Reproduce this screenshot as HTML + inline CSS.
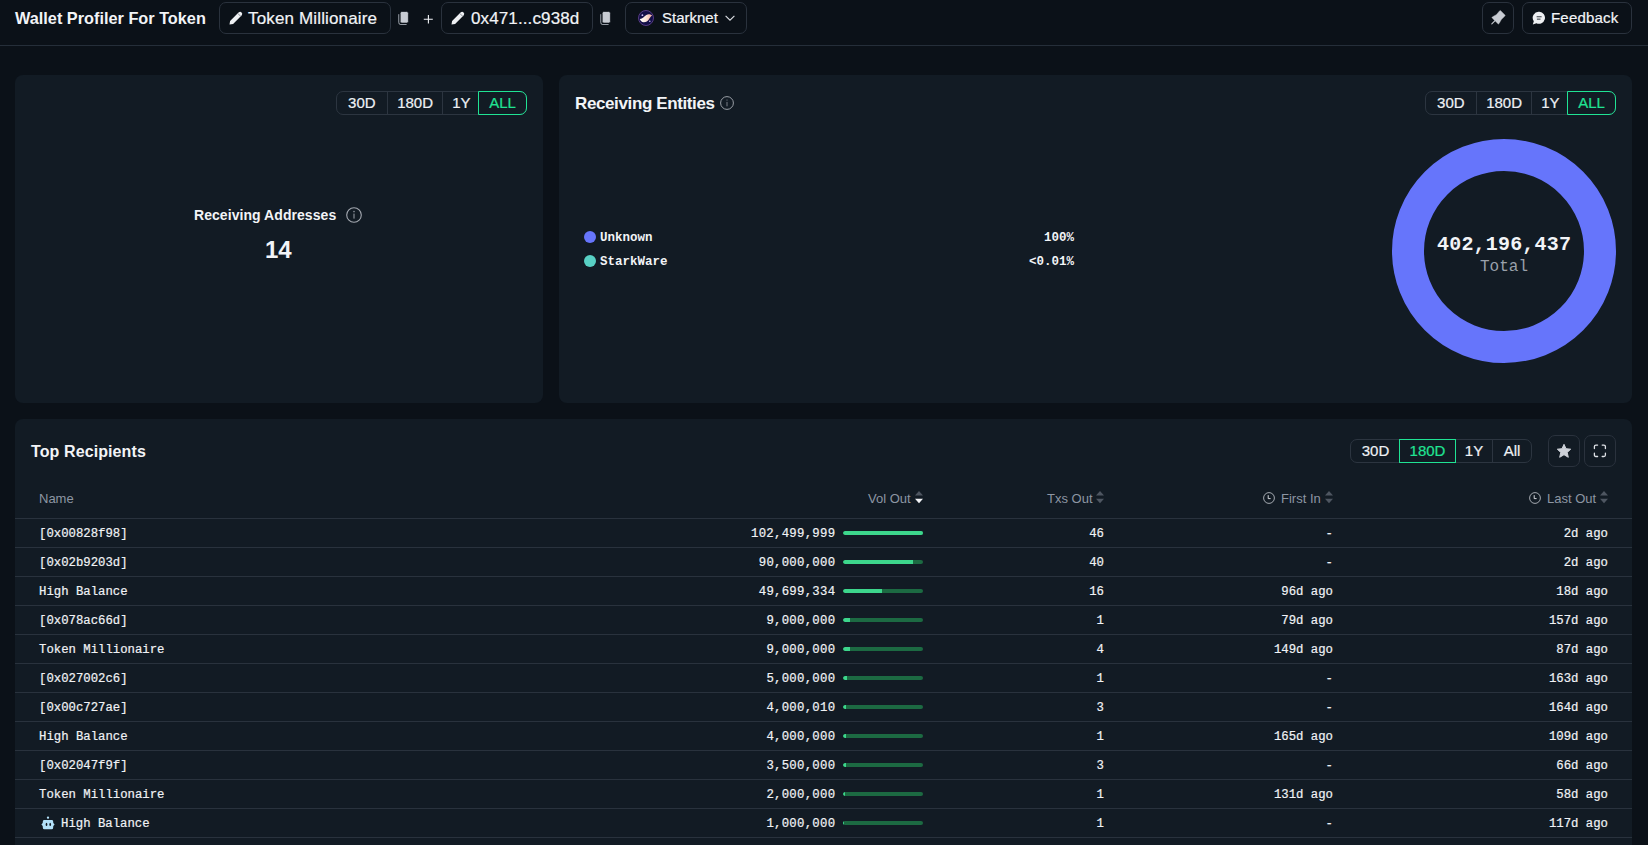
<!DOCTYPE html>
<html><head><meta charset="utf-8">
<style>
*{box-sizing:border-box;margin:0;padding:0}
html,body{width:1648px;height:845px;overflow:hidden;background:#0b1118;color:#f2f4f7;font-family:"Liberation Sans",sans-serif}
.abs{position:absolute;white-space:nowrap;line-height:1}
.med{-webkit-text-stroke:0.2px currentColor}
.hdr{position:absolute;left:0;top:0;width:1648px;height:46px;border-bottom:1px solid #252e39}
.btn{position:absolute;top:2px;height:32px;border:1px solid #2a323d;border-radius:7px;background:#0b1118}
.card{position:absolute;background:#121b24;border-radius:8px}
.seg{position:absolute;border:1px solid #2c3540;border-radius:7px;display:flex}
.seg div{-webkit-text-stroke:0.2px currentColor;height:100%;display:flex;align-items:center;justify-content:center;font-size:15px;padding-bottom:2px;color:#eef1f5;border-left:1px solid #2c3540;position:relative}
.seg div:first-child{border-left:none}
.seg div.on{color:#20e394;border:1px solid #20e394;margin:-1px -1px -1px -1px;height:calc(100% + 2px);z-index:1}
.row{position:absolute;left:15px;width:1617px;height:29px;border-bottom:1px solid #29323d}
.row span{position:absolute;top:9.2px;line-height:1;font-family:"Liberation Mono",monospace;font-size:12.3px;color:#f0f2f5;white-space:pre;-webkit-text-stroke:0.2px #f0f2f5}
.bar{position:absolute;left:828px;top:12px;width:80px;height:4px;border-radius:2px;background:#1c6a42;overflow:hidden}
.bar i{display:block;height:100%;background:#3dd68c;border-radius:2px 0 0 2px}
.th{position:absolute;top:492px;font-size:13px;line-height:1;color:#8d96a3;white-space:nowrap}
.mono{font-family:"Liberation Mono",monospace}
</style></head><body>

<div class="hdr"></div>
<div class="abs" style="left:15px;top:10px;font-size:16.3px;font-weight:bold">Wallet Profiler For Token</div>

<div class="btn" style="left:219px;width:172px"></div>
<svg class="abs" style="left:229px;top:11px" width="14" height="14" viewBox="0 0 14 14"><path d="M0.5 13.5 L1.1 9.9 L9.8 1.2 A2.15 2.15 0 0 1 12.8 4.2 L4.1 12.9 Z" fill="#eef0f3"/><path d="M8.7 2.3 L11.7 5.3" stroke="#737a82" stroke-width="0.85"/></svg>
<div class="abs med" style="left:248px;top:10.3px;font-size:17px;letter-spacing:0.15px">Token Millionaire</div>

<svg class="abs" style="left:398px;top:11px" width="11" height="14" viewBox="0 0 11 14"><path d="M0.8 3.2 V11.6 Q0.8 13.6 2.8 13.6 H8.6" stroke="#a4aab2" stroke-width="1" fill="none"/><rect x="2.2" y="0.5" width="8.2" height="11.6" rx="1.7" fill="#c8ccd3" stroke="#0b1118" stroke-width="0.7"/></svg>
<svg class="abs" style="left:423px;top:14px" width="10" height="10" viewBox="0 0 10 10"><path d="M5.4 1 V9.5 M0.8 5.3 H9.8" stroke="#f2f4f7" stroke-width="1.1"/></svg>

<div class="btn" style="left:441px;width:152px"></div>
<svg class="abs" style="left:451px;top:11px" width="14" height="14" viewBox="0 0 14 14"><path d="M0.5 13.5 L1.1 9.9 L9.8 1.2 A2.15 2.15 0 0 1 12.8 4.2 L4.1 12.9 Z" fill="#eef0f3"/><path d="M8.7 2.3 L11.7 5.3" stroke="#737a82" stroke-width="0.85"/></svg>
<div class="abs med" style="left:471px;top:10.3px;font-size:17px;letter-spacing:0.12px">0x471...c938d</div>
<svg class="abs" style="left:600px;top:11px" width="11" height="14" viewBox="0 0 11 14"><path d="M0.8 3.2 V11.6 Q0.8 13.6 2.8 13.6 H8.6" stroke="#a4aab2" stroke-width="1" fill="none"/><rect x="2.2" y="0.5" width="8.2" height="11.6" rx="1.7" fill="#c8ccd3" stroke="#0b1118" stroke-width="0.7"/></svg>

<div class="btn" style="left:625px;width:122px"></div>
<svg class="abs" style="left:638px;top:10px" width="16" height="16" viewBox="0 0 16 16"><defs><linearGradient id="sg" x1="0" y1="0" x2="1" y2="0"><stop offset="0" stop-color="#ffffff"/><stop offset="0.5" stop-color="#fbe6dc"/><stop offset="1" stop-color="#f0a898"/></linearGradient></defs><circle cx="8" cy="8" r="7.5" fill="#130f48" stroke="#5e3f8c" stroke-width="0.9"/><path d="M1.8 9 C3.5 8.8 5 8.4 6.4 6.6 C7.7 4.9 9.4 4 11.4 4.2 C12.5 4.3 13.5 4.8 14.2 5.4 C13 5.9 12 7.5 11 9.2 C9.8 11.2 8 12.3 5.6 12.2 C3.8 12.1 2.5 10.8 1.8 9 Z" fill="url(#sg)"/><circle cx="4.4" cy="5.2" r="0.9" fill="#cbb8f2"/><circle cx="11.8" cy="11.2" r="0.8" fill="#cbb8f2"/></svg>
<div class="abs med" style="left:662px;top:10.3px;font-size:15px">Starknet</div>
<svg class="abs" style="left:725px;top:15px" width="10" height="6" viewBox="0 0 10 6"><path d="M0.6 0.8 L5 5.2 L9.4 0.8" fill="none" stroke="#dcdfe4" stroke-width="1.1"/></svg>

<div class="btn" style="left:1482px;width:32px"></div>
<svg class="abs" style="left:1486px;top:6px" width="24" height="24" viewBox="0 0 24 24"><path d="M13.6 4.9 Q14.2 4.3 14.8 4.9 L18.8 8.9 Q19.4 9.5 18.8 10.1 L15.3 13.5 L13 17.6 Q12.6 18.2 12 17.7 L6.2 11.9 Q5.7 11.4 6.3 11 L10.4 8.7 Z" fill="#c8ccd3" stroke="#c8ccd3" stroke-width="0.5" stroke-linejoin="round"/><path d="M8.8 14.9 L5.8 17.9" stroke="#c8ccd3" stroke-width="1.1" stroke-linecap="round"/></svg>

<div class="btn" style="left:1522px;width:110px"></div>
<svg class="abs" style="left:1532px;top:11px" width="14" height="14" viewBox="0 0 14 14"><path d="M7.4 0.8 A6 6 0 1 1 4.4 12.2 L0.8 13.4 L1.8 10.2 A6 6 0 0 1 7.4 0.8 Z" fill="#eef0f3"/><rect x="4.6" y="5.2" width="5" height="1.1" fill="#444a52"/><rect x="4.9" y="7.6" width="3.6" height="1.1" fill="#444a52"/></svg>
<div class="abs med" style="left:1551px;top:10.1px;font-size:15px;letter-spacing:0.2px">Feedback</div>

<!-- Card 1 -->
<div class="card" style="left:15px;top:75px;width:528px;height:328px"></div>
<div class="seg" style="left:336px;top:91px;width:191px;height:24px">
 <div style="width:50px">30D</div><div style="width:56px">180D</div><div style="width:37px">1Y</div><div class="on" style="width:49px;border-radius:0 7px 7px 0">ALL</div>
</div>
<div class="abs" style="left:194px;top:208px;font-size:14px;font-weight:bold;letter-spacing:0.06px">Receiving Addresses</div>
<svg class="abs" style="left:346px;top:207px" width="16" height="16" viewBox="0 0 16 16"><circle cx="8" cy="8" r="7.3" fill="none" stroke="#a3a8b0" stroke-width="1.1"/><rect x="7.35" y="6.6" width="1.3" height="5" fill="#7d838c"/><circle cx="8" cy="4.6" r="0.8" fill="#8d939b"/></svg>
<div class="abs" style="left:265px;top:237.5px;font-size:24px;font-weight:bold">14</div>

<!-- Card 2 -->
<div class="card" style="left:559px;top:75px;width:1073px;height:328px"></div>
<div class="abs" style="left:575px;top:95.2px;font-size:17px;font-weight:bold;letter-spacing:-0.38px">Receiving Entities</div>
<svg class="abs" style="left:720px;top:96px" width="14" height="14" viewBox="0 0 14 14"><circle cx="7" cy="7" r="6.4" fill="none" stroke="#a0a5ad" stroke-width="0.95"/><rect x="6.45" y="5.9" width="1.1" height="4.4" fill="#6f757e"/><rect x="6.45" y="3.6" width="1.1" height="1" fill="#6f757e"/></svg>
<div class="seg" style="left:1425px;top:91px;width:191px;height:24px">
 <div style="width:50px">30D</div><div style="width:56px">180D</div><div style="width:37px">1Y</div><div class="on" style="width:49px;border-radius:0 7px 7px 0">ALL</div>
</div>
<div class="abs" style="left:584px;top:231px;width:12px;height:12px;border-radius:50%;background:#6675fb"></div>
<div class="abs" style="left:584px;top:255px;width:12px;height:12px;border-radius:50%;background:#58d0c4"></div>
<div class="abs mono" style="left:600px;top:231.7px;font-size:12.5px;font-weight:bold">Unknown</div>
<div class="abs mono" style="left:600px;top:255.7px;font-size:12.5px;font-weight:bold">StarkWare</div>
<div class="abs mono" style="right:574px;top:231.7px;font-size:12.5px;font-weight:bold">100%</div>
<div class="abs mono" style="right:574px;top:255.7px;font-size:12.5px;font-weight:bold">&lt;0.01%</div>
<svg class="abs" style="left:1392px;top:139px" width="224" height="224" viewBox="0 0 224 224"><circle cx="112" cy="112" r="96" fill="none" stroke="#6675fb" stroke-width="32"/></svg>
<div class="abs mono" style="left:1404px;width:200px;text-align:center;top:235px;font-size:20px;font-weight:bold;letter-spacing:0.18px;text-indent:0.18px">402,196,437</div>
<div class="abs mono" style="left:1404px;width:200px;text-align:center;top:258.7px;font-size:16px;color:#9aa1ab">Total</div>

<!-- Card 3 -->
<div class="card" style="left:15px;top:419px;width:1617px;height:440px"></div>
<div class="abs" style="left:31px;top:443.6px;font-size:16px;font-weight:bold;letter-spacing:0.1px">Top Recipients</div>
<div class="seg" style="left:1350px;top:439px;width:182px;height:24px">
 <div style="width:49px">30D</div><div class="on" style="width:57px;border-radius:0">180D</div><div style="width:37px">1Y</div><div style="width:39px">All</div>
</div>
<div class="btn" style="left:1548px;top:435px;width:32px;background:#121b24"></div>
<svg class="abs" style="left:1556px;top:443px" width="16" height="16" viewBox="0 0 16 16"><path d="M8 1.3 L10 5.7 L14.7 6.2 L11.2 9.4 L12.3 14.3 L8 11.7 L3.7 14.3 L4.8 9.4 L1.3 6.2 L6 5.7 Z" fill="#cdd1d8" stroke="#cdd1d8" stroke-width="1" stroke-linejoin="round"/></svg>
<div class="btn" style="left:1584px;top:435px;width:32px;background:#121b24"></div>
<svg class="abs" style="left:1593px;top:444px" width="14" height="14" viewBox="0 0 14 14"><path d="M1.4 4.6 V2.6 Q1.4 1.1 2.9 1.1 H4.6 M9.2 1.1 H10.9 Q12.4 1.1 12.4 2.6 V4.6 M12.4 9.2 V11 Q12.4 12.5 10.9 12.5 H9.2 M4.6 12.5 H2.9 Q1.4 12.5 1.4 11 V9.2" fill="none" stroke="#dfe2e7" stroke-width="1.3" stroke-linecap="round"/></svg>

<div class="th" style="left:39px">Name</div>
<div class="th" style="left:868px">Vol Out</div>
<svg class="abs" style="left:915px;top:491px" width="8" height="13" viewBox="0 0 8 13"><path d="M0 4.4 L4 0 L8 4.4 Z" fill="#4e5661"/><path d="M0 7.8 L4 12.2 L8 7.8 Z" fill="#f2f4f7"/></svg>
<div class="th" style="left:1047px">Txs Out</div>
<svg class="abs" style="left:1096px;top:491px" width="8" height="13" viewBox="0 0 8 13"><path d="M0 4.4 L4 0 L8 4.4 Z" fill="#4e5661"/><path d="M0 7.8 L4 12.2 L8 7.8 Z" fill="#4e5661"/></svg>
<svg class="abs" style="left:1263px;top:492px" width="12" height="12" viewBox="0 0 12 12"><circle cx="6" cy="6" r="5.4" fill="none" stroke="#b4b9c0" stroke-width="0.9"/><path d="M5.2 3.2 V6.6 H7.6" fill="none" stroke="#d6d9de" stroke-width="1"/></svg>
<div class="th" style="left:1281px">First In</div>
<svg class="abs" style="left:1325px;top:491px" width="8" height="13" viewBox="0 0 8 13"><path d="M0 4.4 L4 0 L8 4.4 Z" fill="#4e5661"/><path d="M0 7.8 L4 12.2 L8 7.8 Z" fill="#4e5661"/></svg>
<svg class="abs" style="left:1529px;top:492px" width="12" height="12" viewBox="0 0 12 12"><circle cx="6" cy="6" r="5.4" fill="none" stroke="#b4b9c0" stroke-width="0.9"/><path d="M5.2 3.2 V6.6 H7.6" fill="none" stroke="#d6d9de" stroke-width="1"/></svg>
<div class="th" style="left:1547px">Last Out</div>
<svg class="abs" style="left:1600px;top:491px" width="8" height="13" viewBox="0 0 8 13"><path d="M0 4.4 L4 0 L8 4.4 Z" fill="#4e5661"/><path d="M0 7.8 L4 12.2 L8 7.8 Z" fill="#4e5661"/></svg>
<div class="abs" style="left:15px;top:518px;width:1617px;height:1px;background:#29323d"></div>

<div class="row" style="top:519px"><span style="left:24px">[0x00828f98]</span><span class="r" style="right:796.7px;letter-spacing:0.28px">102,499,999</span><div class="bar"><i style="width:100.00%"></i></div><span class="r" style="right:528px">46</span><span class="r" style="right:299px">-</span><span class="r" style="right:24px">2d ago</span></div>
<div class="row" style="top:548px"><span style="left:24px">[0x02b9203d]</span><span class="r" style="right:796.7px;letter-spacing:0.28px">90,000,000</span><div class="bar"><i style="width:87.80%"></i></div><span class="r" style="right:528px">40</span><span class="r" style="right:299px">-</span><span class="r" style="right:24px">2d ago</span></div>
<div class="row" style="top:577px"><span style="left:24px">High Balance</span><span class="r" style="right:796.7px;letter-spacing:0.28px">49,699,334</span><div class="bar"><i style="width:48.49%"></i></div><span class="r" style="right:528px">16</span><span class="r" style="right:299px">96d ago</span><span class="r" style="right:24px">18d ago</span></div>
<div class="row" style="top:606px"><span style="left:24px">[0x078ac66d]</span><span class="r" style="right:796.7px;letter-spacing:0.28px">9,000,000</span><div class="bar"><i style="width:8.78%"></i></div><span class="r" style="right:528px">1</span><span class="r" style="right:299px">79d ago</span><span class="r" style="right:24px">157d ago</span></div>
<div class="row" style="top:635px"><span style="left:24px">Token Millionaire</span><span class="r" style="right:796.7px;letter-spacing:0.28px">9,000,000</span><div class="bar"><i style="width:8.78%"></i></div><span class="r" style="right:528px">4</span><span class="r" style="right:299px">149d ago</span><span class="r" style="right:24px">87d ago</span></div>
<div class="row" style="top:664px"><span style="left:24px">[0x027002c6]</span><span class="r" style="right:796.7px;letter-spacing:0.28px">5,000,000</span><div class="bar"><i style="width:4.88%"></i></div><span class="r" style="right:528px">1</span><span class="r" style="right:299px">-</span><span class="r" style="right:24px">163d ago</span></div>
<div class="row" style="top:693px"><span style="left:24px">[0x00c727ae]</span><span class="r" style="right:796.7px;letter-spacing:0.28px">4,000,010</span><div class="bar"><i style="width:3.90%"></i></div><span class="r" style="right:528px">3</span><span class="r" style="right:299px">-</span><span class="r" style="right:24px">164d ago</span></div>
<div class="row" style="top:722px"><span style="left:24px">High Balance</span><span class="r" style="right:796.7px;letter-spacing:0.28px">4,000,000</span><div class="bar"><i style="width:3.90%"></i></div><span class="r" style="right:528px">1</span><span class="r" style="right:299px">165d ago</span><span class="r" style="right:24px">109d ago</span></div>
<div class="row" style="top:751px"><span style="left:24px">[0x02047f9f]</span><span class="r" style="right:796.7px;letter-spacing:0.28px">3,500,000</span><div class="bar"><i style="width:3.41%"></i></div><span class="r" style="right:528px">3</span><span class="r" style="right:299px">-</span><span class="r" style="right:24px">66d ago</span></div>
<div class="row" style="top:780px"><span style="left:24px">Token Millionaire</span><span class="r" style="right:796.7px;letter-spacing:0.28px">2,000,000</span><div class="bar"><i style="width:1.95%"></i></div><span class="r" style="right:528px">1</span><span class="r" style="right:299px">131d ago</span><span class="r" style="right:24px">58d ago</span></div>
<div class="row" style="top:809px"><svg viewBox="0 0 14 14" style="position:absolute;left:26px;top:7px;width:14px;height:14px"><circle cx="7" cy="1.7" r="1.15" fill="#b3e2fa"/><path d="M3.2 3.9 H10.8 Q12 3.9 12.1 5.1 L12.3 7 L13.6 8.5 L12.3 10 L12.1 12 Q12 13.2 10.8 13.2 H3.2 Q2 13.2 1.9 12 L1.7 10 L0.4 8.5 L1.7 7 L1.9 5.1 Q2 3.9 3.2 3.9 Z" fill="#b3e2fa"/><ellipse cx="5.5" cy="8.4" rx="0.85" ry="1.6" fill="#131b25"/><ellipse cx="9.2" cy="8.4" rx="0.85" ry="1.6" fill="#131b25"/></svg><span style="left:46px">High Balance</span><span class="r" style="right:796.7px;letter-spacing:0.28px">1,000,000</span><div class="bar"><i style="width:0.98%"></i></div><span class="r" style="right:528px">1</span><span class="r" style="right:299px">-</span><span class="r" style="right:24px">117d ago</span></div>

</body></html>
